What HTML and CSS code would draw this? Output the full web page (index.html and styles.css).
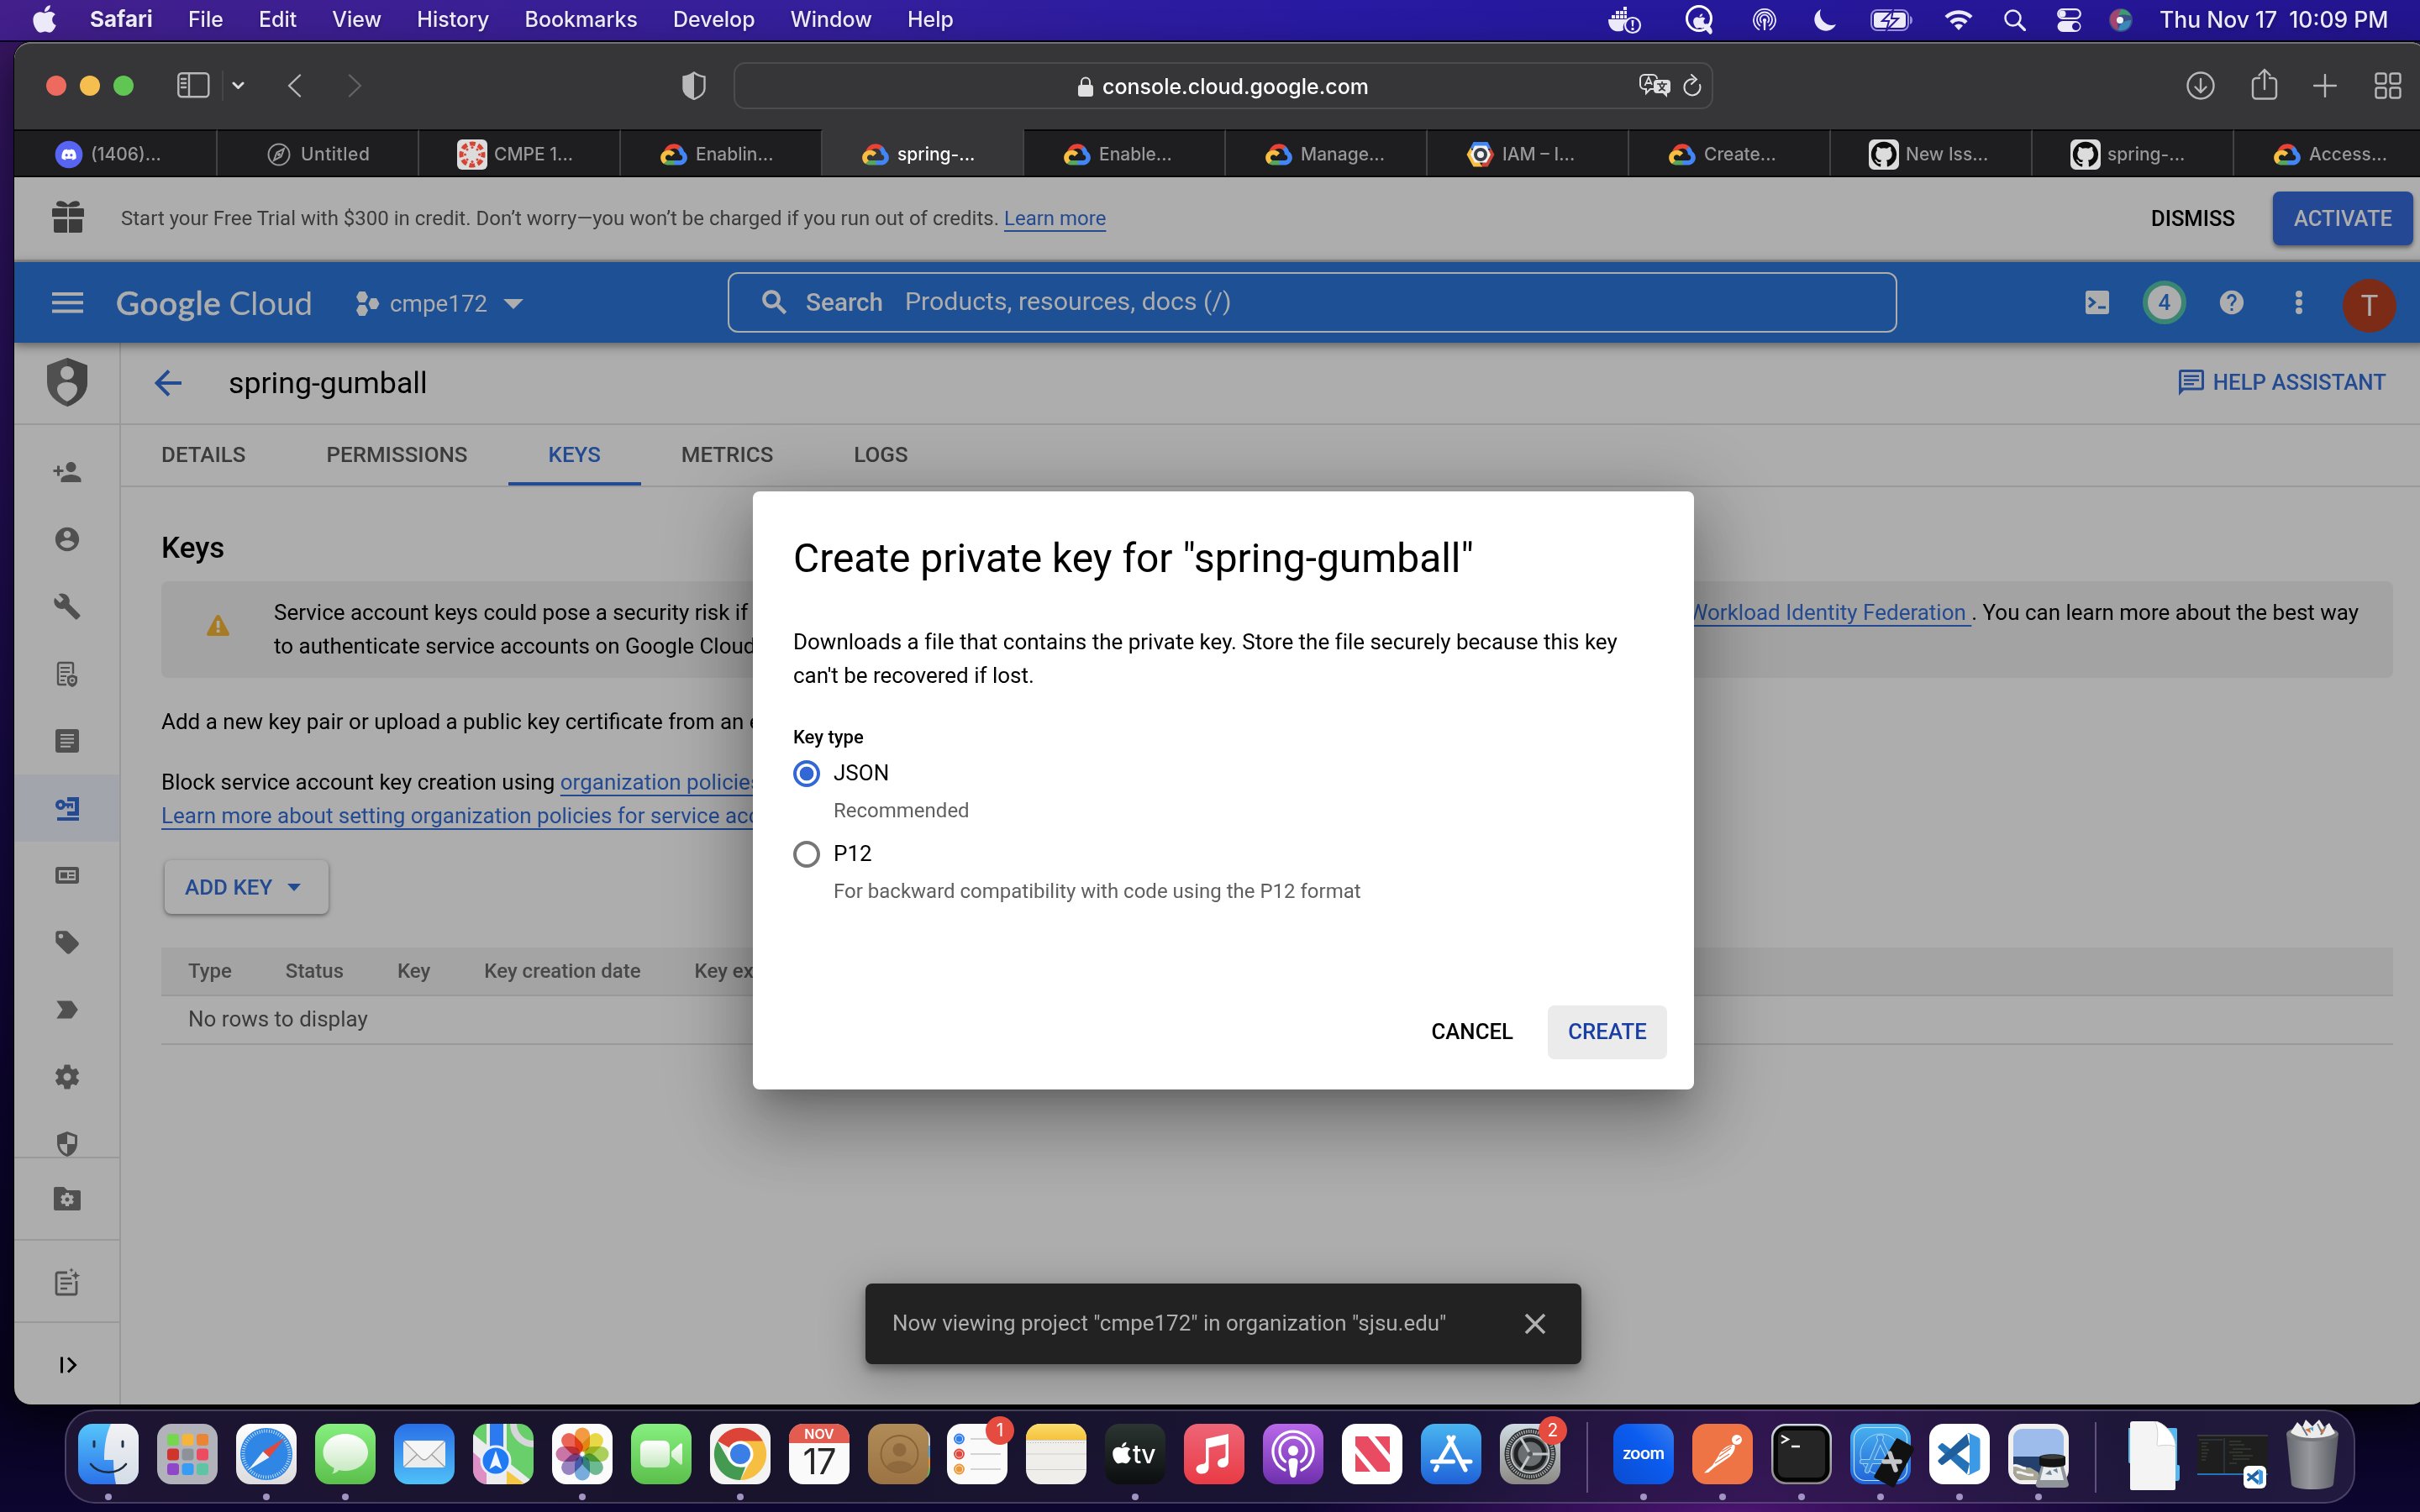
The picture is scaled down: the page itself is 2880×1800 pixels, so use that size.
FILE: index.html
```html
<!DOCTYPE html>
<html lang="en">
<head>
<meta charset="utf-8">
<title>spring-gumball – Service accounts – Google Cloud</title>
<link rel="stylesheet" href="styles.css">
</head>
<body>
<svg class="defs" width="0" height="0" aria-hidden="true">
  <symbol id="gcloud" viewBox="5 14 118 95">
    <path fill="#ea4335" d="M80.6 40.3h.4l-.2-.2 14-14v-.3c-11.8-10.4-28.1-14-43.2-9.5C36.5 20.8 24.9 32.8 20.7 48c.2-.1.5-.2.8-.2 5.2-3.4 11.4-5.4 17.9-5.4 2.2 0 4.3.2 6.4.6.1-.1.2-.1.3-.1 9-9.9 24.2-11.1 34.6-2.6h-.1z"/>
    <path fill="#4285f4" d="M108.1 47.8c-2.3-8.5-7.1-16.2-13.8-22.1L80 39.9c6 4.9 9.5 12.3 9.3 20v2.5c16.9 0 16.9 25.2 0 25.2H63.9v20.2h25.4c14.6.1 27.5-9.3 31.8-23.1 4.3-13.8-1-28.8-13-36.9z"/>
    <path fill="#57a55a" d="M39 107.9h26.3V87.7H39c-1.9 0-3.7-.4-5.4-1.1l-15.2 14.6v.2c6 4.3 13.2 6.6 20.7 6.6z"/>
    <path fill="#f6bf42" d="M40.2 41.9c-14.9.1-28.1 9.3-32.9 22.8-4.8 13.6 0 28.5 11.8 37.3l15.6-14.9c-8.6-3.7-10.6-14.5-4-20.8 6.6-6.4 17.8-4.4 21.7 3.8L68 55.2C61.4 46.9 51.1 42 40.2 42.1z"/>
  </symbol>
  <symbol id="github" viewBox="-1.5 -1.5 19 19">
    <rect x="-1.5" y="-1.5" width="19" height="19" rx="3.4" fill="#dcdcdc"/>
    <path fill="#0d0d0e" d="M8 0C3.58 0 0 3.58 0 8c0 3.54 2.29 6.53 5.47 7.59.4.07.55-.17.55-.38 0-.19-.01-.82-.01-1.49-2.01.37-2.53-.49-2.69-.94-.09-.23-.48-.94-.82-1.13-.28-.15-.68-.52-.01-.53.63-.01 1.08.58 1.23.82.72 1.21 1.87.87 2.33.66.07-.52.28-.87.51-1.07-1.78-.2-3.64-.89-3.64-3.95 0-.87.31-1.59.82-2.15-.08-.2-.36-1.02.08-2.12 0 0 .67-.21 2.2.82.64-.18 1.32-.27 2-.27s1.36.09 2 .27c1.53-1.04 2.2-.82 2.2-.82.44 1.1.16 1.92.08 2.12.51.56.82 1.27.82 2.15 0 3.07-1.87 3.75-3.65 3.95.29.25.54.73.54 1.48 0 1.07-.01 1.93-.01 2.2 0 .21.15.46.55.38A8.01 8.01 0 0016 8c0-4.42-3.58-8-8-8z"/>
  </symbol>
  <symbol id="apple" viewBox="0 28 384 456">
    <path d="M318.7 268.7c-.2-36.7 16.4-64.4 50-84.8-18.8-26.9-47.2-41.7-84.7-44.6-35.5-2.8-74.3 20.7-88.5 20.7-15 0-49.4-19.7-76.4-19.7C63.3 141.2 4 184.8 4 273.5q0 39.3 14.4 81.2c12.8 36.7 59 126.7 107.2 125.2 25.2-.6 43-17.9 75.8-17.9 31.8 0 48.3 17.9 76.4 17.9 48.6-.7 90.4-82.5 102.6-119.3-65.2-30.7-61.7-90-61.7-91.9zm-56.6-164.2c27.3-32.4 24.8-61.9 24-72.5-24.1 1.4-52 16.4-67.9 34.9-17.5 19.8-27.8 44.3-25.6 71.9 26.1 2 49.9-11.4 69.5-34.3z"/>
  </symbol>
  <symbol id="gear" viewBox="0 0 24 24">
    <path d="M19.14 12.94c.04-.3.06-.61.06-.94 0-.32-.02-.64-.07-.94l2.03-1.58c.18-.14.23-.41.12-.61l-1.92-3.32c-.12-.22-.37-.29-.59-.22l-2.39.96c-.5-.38-1.03-.7-1.62-.94l-.36-2.54c-.04-.24-.24-.41-.48-.41h-3.84c-.24 0-.43.17-.47.41l-.36 2.54c-.59.24-1.13.57-1.62.94l-2.39-.96c-.22-.08-.47 0-.59.22L2.74 8.87c-.12.21-.08.47.12.61l2.03 1.58c-.05.3-.09.63-.09.94s.02.64.07.94l-2.03 1.58c-.18.14-.23.41-.12.61l1.92 3.32c.12.22.37.29.59.22l2.39-.96c.5.38 1.03.7 1.62.94l.36 2.54c.05.24.24.41.48.41h3.84c.24 0 .44-.17.47-.41l.36-2.54c.59-.24 1.13-.56 1.62-.94l2.39.96c.22.08.47 0 .59-.22l1.92-3.32c.12-.22.07-.47-.12-.61l-2.01-1.58zM12 15c-1.65 0-3-1.35-3-3s1.35-3 3-3 3 1.35 3 3-1.35 3-3 3z"/>
  </symbol>
  <symbol id="vscode" viewBox="0 0 24 24">
    <path fill="#2472b8" d="M.33 7.26A1 1 0 0 0 .33 8.74L16.5 23.5l1.5-6.05L2.93 6a1 1 0 0 0-1.28.06z"/>
    <path fill="#1f5f9e" d="M.33 15.26a1 1 0 0 0 0 1.48l1.32 1.2a1 1 0 0 0 1.28.06L18 6.55 16.5.5z"/>
    <path fill="#3c99e6" d="M16.5.5A1.5 1.5 0 0 1 18.21.21l4.94 2.38A1.5 1.5 0 0 1 24 3.94v16.12a1.5 1.5 0 0 1-.85 1.35l-4.94 2.38a1.5 1.5 0 0 1-1.7-.29c.5.3 1.5 0 1.5-1V1.5c0-1-1-1.3-1.5-1z"/>
  </symbol>
  <linearGradient id="gGreen" x2="0" y2="1"><stop offset="0" stop-color="#86ef7f"/><stop offset="1" stop-color="#5bbf4b"/></linearGradient>
  <linearGradient id="gBlueDown" x2="0" y2="1"><stop offset="0" stop-color="#2a6fe8"/><stop offset="1" stop-color="#4fc0f8"/></linearGradient>
  <linearGradient id="gBlueUp" x2="0" y2="1"><stop offset="0" stop-color="#49b5f0"/><stop offset="1" stop-color="#1f62d8"/></linearGradient>
  <linearGradient id="gWhite" x2="0" y2="1"><stop offset="0" stop-color="#fff"/><stop offset="1" stop-color="#dcdcdc"/></linearGradient>
  <linearGradient id="gWhiteGreen" x2="0" y2="1"><stop offset="0" stop-color="#fff"/><stop offset="1" stop-color="#c4e8bd"/></linearGradient>
  <linearGradient id="gFinder" x2="0" y2="1"><stop offset="0" stop-color="#56c5fa"/><stop offset="1" stop-color="#2b72ea"/></linearGradient>
  <linearGradient id="gFinderR" x2="0" y2="1"><stop offset="0" stop-color="#f2f2f5"/><stop offset="1" stop-color="#d3dce6"/></linearGradient>
  <linearGradient id="gBrown" x2="0" y2="1"><stop offset="0" stop-color="#b08c58"/><stop offset="1" stop-color="#9c7344"/></linearGradient>
  <linearGradient id="gNote" x2="0" y2="1"><stop offset="0" stop-color="#fbdc6c"/><stop offset="1" stop-color="#f5c23c"/></linearGradient>
  <linearGradient id="gTv" x2="0" y2="1"><stop offset="0" stop-color="#2b3531"/><stop offset="1" stop-color="#0c0e10"/></linearGradient>
  <linearGradient id="gMusic" x2="0" y2="1"><stop offset="0" stop-color="#ee6577"/><stop offset="1" stop-color="#e93b45"/></linearGradient>
  <linearGradient id="gPod" x2="0" y2="1"><stop offset="0" stop-color="#b969ea"/><stop offset="1" stop-color="#6f30ad"/></linearGradient>
  <linearGradient id="gZoom" x1="1" y1="0" x2="0" y2="1"><stop offset="0" stop-color="#3a7fec"/><stop offset=".4" stop-color="#0b5cf0"/><stop offset="1" stop-color="#0a4cd0"/></linearGradient>
  <linearGradient id="gGray" x2="0" y2="1"><stop offset="0" stop-color="#cfdce2"/><stop offset="1" stop-color="#8b8985"/></linearGradient>
  <linearGradient id="gTrash" x2="1" y2="0"><stop offset="0" stop-color="#6d7174"/><stop offset=".45" stop-color="#a4a7a9"/><stop offset="1" stop-color="#5e6265"/></linearGradient>
  <radialGradient id="gSiri"><stop offset="0" stop-color="#fff"/><stop offset=".35" stop-color="#79a8d8"/><stop offset=".7" stop-color="#5a4a86"/><stop offset="1" stop-color="#3e8a6a"/></radialGradient>
</svg>

<header class="menubar">
  <nav class="menus">
    <svg class="apple" width="28" height="33"><use href="#apple"/></svg>
    <b>Safari</b><span>File</span><span>Edit</span><span>View</span><span>History</span><span>Bookmarks</span><span>Develop</span><span>Window</span><span>Help</span>
  </nav>
  <div class="status">
    <svg width="40" height="34" viewBox="0 0 40 34"><path d="M0 16h24a11 11 0 0 0-6 13c-6 3-18 2-18-13z"/><path d="M4 11h4v4H4zM9 11h4v4H9zM14 11h4v4h-4zM19 11h3v4h-3zM9 6h4v4H9zM14 6h4v4h-4zM19 6h3v4h-3zM18 1h4v4h-4z"/><circle cx="29" cy="23" r="9" fill="none" stroke="#eceaf8" stroke-width="2.200"/><path d="M27.500 17h3l-.6 7.500h-1.800zM27.500 26h3v3h-3z"/></svg>
    <svg width="36" height="36" viewBox="0 0 36 36"><circle cx="17" cy="16" r="14.500" fill="none" stroke="#fff" stroke-width="3"/><use href="#apple" x="10" y="10" width="15" height="18"/><path d="M20 24l10 11c4-1 3-6 1-8l-4-5z"/></svg>
    <svg width="28" height="28" viewBox="0 0 28 28" fill="none" stroke="#eceaf8" stroke-width="1.800"><path fill="none" d="M8 25.500a13 13 0 1 1 12 0M9 21a9 9 0 1 1 10 0M10.500 17a5.300 5.300 0 1 1 7 0"/><path d="M14 12a2 2 0 0 1 1.500 3.500L15 26h-2l-.5-10.500A2 2 0 0 1 14 12z" fill="#eceaf8" stroke="none"/></svg>
    <svg width="26" height="26" viewBox="0 0 26 26"><path d="M8 0a13.500 13.500 0 1 0 18 18A14 14 0 0 1 8 0z"/></svg>
    <svg width="50" height="26" viewBox="0 0 50 26"><rect x="1" y="1" width="44" height="24" rx="7" fill="none" stroke="#9a90d4" stroke-width="2"/><path d="M47 8c4 1 4 9 0 10z" fill="#9a90d4"/><rect x="4" y="4" width="38" height="18" rx="4"/><path d="M27 1L14 14h8l-3 11 14-14h-8z" stroke="#2a1a9a" stroke-width="2"/></svg>
    <svg width="34" height="26" viewBox="0 0 34 26" fill="none" stroke="#eceaf8" stroke-width="4.500"><path fill="none" d="M2 9.500a21.500 21.500 0 0 1 30 0M8 15.800a12.800 12.800 0 0 1 18 0"/><path d="M17 25l-5-5.500a7.500 7.500 0 0 1 10 0z" fill="#eceaf8" stroke="none"/></svg>
    <svg width="26" height="26" viewBox="0 0 26 26" stroke="#eceaf8" stroke-linecap="round"><circle cx="10.500" cy="10.500" r="9" fill="none" stroke-width="2.500"/><path d="M17 17l7.500 7.500" stroke-width="3.200"/></svg>
    <svg width="29" height="28" viewBox="0 0 29 28"><rect x="1.200" y="1.200" width="26.600" height="10.600" rx="5.300" fill="none" stroke="#eceaf8" stroke-width="2.200"/><circle cx="6.500" cy="6.500" r="4"/><path fill-rule="evenodd" d="M7 15h15a6.500 6.500 0 0 1 0 13H7a6.500 6.500 0 0 1 0-13zm15.500 2a4.500 4.500 0 1 0 0 9 4.500 4.500 0 0 0 0-9z"/></svg>
    <svg width="28" height="28" viewBox="0 0 28 28"><circle cx="14" cy="14" r="14" fill="#3b4f86"/><path d="M14 1a13 13 0 0 1 12 8c-6-2-12-2-16 0z" fill="#3f9a72"/><path d="M2 8A14 14 0 0 1 14 1c-3 6-5 16-3 25A14 14 0 0 1 2 8z" fill="#c8406a" opacity=".75"/><path d="M11 26c0-6 6-12 15-12a12 12 0 0 1-15 12z" fill="#3a9fd0" opacity=".7"/><circle cx="13" cy="14" r="4" fill="#fff" opacity=".92"/></svg>
    <time>Thu Nov 17&nbsp; 10:09 PM</time>
  </div>
</header>

<main class="window">
  <div class="toolbar">
    <div class="lights"><i class="red"></i><i class="yellow"></i><i class="green"></i></div>
    <svg width="39" height="31" viewBox="0 0 39 31" class="line"><rect x="1.300" y="1.300" width="36" height="28" rx="4"/><path d="M14 1v28M5 8h5M5 13h5M5 18h5"/></svg>
    <i class="vsep"></i>
    <svg width="15" height="10" viewBox="0 0 15 10" class="line bright"><path d="M2 2l5.500 5.500L13 2"/></svg>
    <svg width="17" height="28" viewBox="0 0 17 28" class="line"><path d="M15 1.500L2 14l13 12.500"/></svg>
    <svg width="17" height="28" viewBox="0 0 17 28" class="line faint"><path d="M2 1.500L15 14 2 26.500"/></svg>
    <svg width="28" height="34" viewBox="0 0 28 34" class="shield"><path d="M14 1.500c4 3 8 4.500 12.500 5v14c0 6-6 10-12.500 12.500C7.500 30.500 1.500 26.500 1.500 20.500v-14C6 6 10 4.500 14 1.500z" fill="none" stroke="#b8b7ba" stroke-width="2.400"/><path d="M14 1.500V33C7.500 30.500 1.500 26.500 1.500 20.500v-14C6 6 10 4.500 14 1.500z"/></svg>
    <div class="url">
      <div class="address"><svg width="18" height="24" viewBox="0 0 18 24"><rect y="10" width="18" height="14" rx="3"/><path d="M4 11V6.500a5 5 0 0 1 10 0V11" fill="none" stroke="#dedede" stroke-width="2"/></svg><span>console.cloud.google.com</span></div>
      <svg width="38" height="28" viewBox="0 0 38 28"><path d="M18 18h-5l-5 5v-5H6a5 5 0 0 1-5-5V6a5 5 0 0 1 5-5h10a5 5 0 0 1 5 5" fill="none" stroke="#dedede" stroke-width="2"/><path d="M6.500 14l4.500-10 4 9M8 11h6" fill="none" stroke="#dedede" stroke-width="1.800"/><path d="M21 7h12a4 4 0 0 1 4 4v8a4 4 0 0 1-4 4v5l-5-5h-7a4 4 0 0 1-4-4v-8a4 4 0 0 1 4-4z"/><path d="M21 12h12M27 9v3M23 20c4-2 6-4 7-8M24 12c1 4 4 7 7 8" fill="none" stroke="#363538" stroke-width="1.700"/></svg>
      <svg width="22" height="27" viewBox="0 0 22 27" class="reload"><path d="M12.500 6.500A9.500 9.500 0 1 0 20 13M10 1l6 5.500-6 5.500" fill="none" stroke="#dedede" stroke-width="2" stroke-linecap="round"/></svg>
    </div>
    <svg width="34" height="34" viewBox="0 0 34 34" class="line"><circle cx="17" cy="17" r="15.500"/><path d="M17 9v16M10.500 18.500L17 25l6.500-6.500"/></svg>
    <svg width="32" height="38" viewBox="0 0 32 38" class="line up"><path d="M10 12H6a4 4 0 0 0-4 4v16.500a4 4 0 0 0 4 4h20a4 4 0 0 0 4-4V16a4 4 0 0 0-4-4h-4M16 25V2M9.500 8.500L16 2l6.500 6.500"/></svg>
    <svg width="28" height="28" viewBox="0 0 28 28" class="line"><path d="M14 1v26M1 14h26"/></svg>
    <svg width="32" height="32" viewBox="0 0 32 32" class="line"><rect x="1.500" y="1.500" width="12" height="12" rx="2.500"/><rect x="18.500" y="1.500" width="12" height="12" rx="2.500"/><rect x="1.500" y="18.500" width="12" height="12" rx="2.500"/><rect x="18.500" y="18.500" width="12" height="12" rx="2.500"/></svg>
  </div>

  <div class="tabs">
    <div class="tab"><svg width="36" height="36" viewBox="-10 -10 44 44"><circle cx="12" cy="12" r="20" fill="#5865f2"/><path transform="translate(1.500 1.500) scale(.88)" fill="#fff" d="M20.317 4.370a19.790 19.790 0 0 0-4.885-1.515c-.3.375-.520.900-.690 1.290a18.270 18.270 0 0 0-5.487 0c-.170-.400-.400-.890-.690-1.290A19.736 19.736 0 0 0 3.677 4.370C.533 9.046-.320 13.580.099 18.057a19.900 19.900 0 0 0 6.070 3.030c.480-.63.900-1.300 1.260-2.040a13.107 13.107 0 0 1-1.900-1l.4-.35c3.950 1.800 8.200 1.800 12.140 0l.4.35c-.6.35-1.200.66-1.900 1 .36.740.780 1.400 1.260 2.040a19.839 19.839 0 0 0 6.080-3.030c.500-5.177-.838-9.674-3.590-13.690zM8.020 15.330c-1.183 0-2.157-1.085-2.157-2.419 0-1.333.956-2.419 2.157-2.419 1.210 0 2.176 1.096 2.157 2.420 0 1.333-.956 2.418-2.157 2.418zm7.975 0c-1.183 0-2.157-1.085-2.157-2.419 0-1.333.955-2.419 2.157-2.419 1.210 0 2.176 1.096 2.157 2.420 0 1.333-.946 2.418-2.157 2.418z"/></svg><span>(1406)...</span></div>
    <div class="tab short"><svg width="36" height="36" viewBox="0 0 36 36" fill="none" stroke="#98989a" stroke-width="2"><circle cx="18" cy="18" r="12.500"/><path d="M24 11l-3.500 9.500L12 25l3.500-9.500z"/><circle cx="18" cy="18" r="1"/></svg><span>Untitled</span></div>
    <div class="tab"><svg width="36" height="36" viewBox="0 0 36 36"><rect width="36" height="36" rx="6" fill="#dcdcdc"/><circle cx="18" cy="18" r="13" fill="none" stroke="#d64434" stroke-width="5" stroke-dasharray="6.800 3.410" stroke-dashoffset="3.400"/><g fill="#d64434"><circle cx="18" cy="9.500" r="1.500"/><circle cx="18" cy="26.500" r="1.500"/><circle cx="9.500" cy="18" r="1.500"/><circle cx="26.500" cy="18" r="1.500"/><circle cx="12" cy="12" r="1.500"/><circle cx="24" cy="12" r="1.500"/><circle cx="12" cy="24" r="1.500"/><circle cx="24" cy="24" r="1.500"/></g></svg><span>CMPE 1...</span></div>
    <div class="tab"><svg class="gc" width="32" height="26"><use href="#gcloud"/></svg><span>Enablin...</span></div>
    <div class="tab active"><svg class="gc" width="32" height="26"><use href="#gcloud"/></svg><span>spring-...</span></div>
    <div class="tab"><svg class="gc" width="32" height="26"><use href="#gcloud"/></svg><span>Enable...</span></div>
    <div class="tab"><svg class="gc" width="32" height="26"><use href="#gcloud"/></svg><span>Manage...</span></div>
    <div class="tab"><svg width="36" height="36" viewBox="0 0 36 36"><path d="M9.500 3h17l4 8h-25z" fill="#4285f4"/><path d="M30 10l4.500 8-8 14.500H18z" fill="#c94535"/><path d="M6 10L1.500 18l8 14.500H20z" fill="#f6bf42"/><path d="M11 7.500h14l5 10.500-5 9.500H11L6 18z" fill="#f1f1f1"/><circle cx="18" cy="18" r="6" fill="none" stroke="#3a3f48" stroke-width="4"/></svg><span>IAM – I...</span></div>
    <div class="tab"><svg class="gc" width="32" height="26"><use href="#gcloud"/></svg><span>Create...</span></div>
    <div class="tab"><svg width="36" height="36"><use href="#github"/></svg><span>New Iss...</span></div>
    <div class="tab"><svg width="36" height="36"><use href="#github"/></svg><span>spring-...</span></div>
    <div class="tab"><svg class="gc" width="32" height="26"><use href="#gcloud"/></svg><span>Access...</span></div>
  </div>

  <section class="banner">
    <svg width="38" height="38" viewBox="0 0 38 38"><path d="M1 9h17v10H0v-9zM20 9h17l1 1v9H20zM2 22h16v16H4a2 2 0 0 1-2-2zM20 22h16v14a2 2 0 0 1-2 2H20zM19 7c-2 1-14 1-14-3s7-6 14 1c7-7 14-5 14-1s-12 4-14 3z"/></svg>
    <p>Start your Free Trial with $300 in credit. Don’t worry—you won’t be charged if you run out of credits. <a>Learn more</a></p>
    <button class="dismiss">DISMISS</button>
    <button class="activate">ACTIVATE</button>
  </section>

  <header class="gcp">
    <svg class="burger" width="37" height="25" viewBox="0 0 37 25"><path d="M0 0h37v4H0zM0 10.300h37v4H0zM0 20.600h37v4H0z"/></svg>
    <div class="logo"><b>Google</b><span>Cloud</span></div>
    <div class="project">
      <svg width="28" height="30" viewBox="0 0 28 30"><path d="M3.500 0h7L14 6.500 10.500 13h-7L0 6.500zM3.500 16h7l3.500 6.500-3.500 6.500h-7L0 22.500zM17.500 8h6.500l3.500 6.500L24 21h-6.500L14.500 14.500z"/></svg>
      <span>cmpe172</span>
      <svg width="24" height="12" viewBox="0 0 24 12"><path d="M0 0h24L12 12z"/></svg>
    </div>
    <div class="search">
      <svg width="38" height="38" viewBox="0 0 24 24"><path d="M15.500 14h-.79l-.28-.27C15.410 12.590 16 11.110 16 9.500 16 5.910 13.090 3 9.500 3S3 5.910 3 9.500 5.910 16 9.500 16c1.610 0 3.090-.59 4.230-1.570l.27.28v.79l5 4.990L20.490 19l-4.990-5zm-6 0C7.010 14 5 11.990 5 9.500S7.010 5 9.500 5 14 7.010 14 9.500 11.990 14 9.500 14z" stroke="#adadad" stroke-width=".7"/></svg>
      <b>Search</b><span>Products, resources, docs (/)</span>
    </div>
    <div class="tools">
      <svg width="28" height="28" viewBox="0 0 28 28"><rect width="28" height="28" rx="3"/><path d="M4 8.500l6.500 5.500L4 19.500M15 20h9" fill="none" stroke="#1d5095" stroke-width="3.200"/></svg>
      <div class="count">4</div>
      <svg width="34" height="34" viewBox="0 0 24 24"><path d="M12 2C6.480 2 2 6.480 2 12s4.480 10 10 10 10-4.480 10-10S17.520 2 12 2zm1 17h-2v-2h2v2zm2.070-7.750l-.9.920C13.450 12.900 13 13.500 13 15h-2v-.5c0-1.100.45-2.100 1.170-2.830l1.240-1.260c.37-.36.59-.86.59-1.410 0-1.100-.9-2-2-2s-2 .9-2 2H8c0-2.210 1.790-4 4-4s4 1.790 4 4c0 .88-.36 1.680-.93 2.250z"/></svg>
      <svg width="8" height="28" viewBox="0 0 8 28"><circle cx="4" cy="4" r="4"/><circle cx="4" cy="14" r="4"/><circle cx="4" cy="24" r="4"/></svg>
      <div class="avatar">T</div>
    </div>
  </header>

  <div class="body">
    <aside class="side">
      <div class="product"><svg width="48" height="58" viewBox="0 0 48 58"><path d="M24 0l24 9v20c0 14-10 24-24 29C10 53 0 43 0 29V9z" fill="#505050"/><path d="M24 0l24 9v20c0 14-10 24-24 29z" fill="#434343"/><circle cx="24" cy="18" r="8" fill="#adadad"/><path d="M12 37c0-5 5-8 12-8s12 3 12 8c0 7-6 12-12 15-6-3-12-8-12-15z" fill="#adadad"/></svg></div>
      <div class="list">
        <div><svg viewBox="0 0 24 24"><path d="M15 12c2.210 0 4-1.790 4-4s-1.790-4-4-4-4 1.790-4 4 1.790 4 4 4zm-9-2V7H4v3H1v2h3v3h2v-3h3v-2H6zm9 4c-2.670 0-8 1.340-8 4v2h16v-2c0-2.660-5.330-4-8-4z"/></svg></div>
        <div><svg class="s" viewBox="0 0 24 24"><path d="M12 2C6.480 2 2 6.480 2 12s4.480 10 10 10 10-4.480 10-10S17.520 2 12 2zm0 3c1.660 0 3 1.340 3 3s-1.340 3-3 3-3-1.340-3-3 1.340-3 3-3zm0 14.200c-2.500 0-4.710-1.280-6-3.220.03-1.990 4-3.080 6-3.080 1.990 0 5.970 1.090 6 3.080-1.290 1.940-3.500 3.220-6 3.220z"/></svg></div>
        <div><svg class="s" viewBox="0 0 24 24"><path d="M22.700 19l-9.100-9.100c.9-2.300.4-5-1.500-6.900-2-2-5-2.400-7.400-1.300L9 6 6 9 1.600 4.700C.4 7.100.9 10.100 2.900 12.100c1.900 1.900 4.600 2.400 6.900 1.500l9.100 9.100c.4.4 1 .4 1.400 0l2.300-2.300c.5-.4.5-1.100.1-1.400z"/></svg></div>
        <div><svg viewBox="0 0 36 36"><path d="M17 31H9a2 2 0 0 1-2-2V7a2 2 0 0 1 2-2h14a2 2 0 0 1 2 2v11" fill="none" stroke="#505050" stroke-width="2.400"/><path d="M10 11h11M10 16h11M10 21h7M10 26h5" stroke="#505050" stroke-width="2.200"/><path d="M24 19l6 2.500v5c0 4-3 6.500-6 7.500-3-1-6-3.500-6-7.500v-5z"/><circle cx="24" cy="26" r="2.600" fill="none" stroke="#adadad" stroke-width="1.600"/></svg></div>
        <div><svg viewBox="0 0 36 36"><path fill-rule="evenodd" d="M7 4h22a3 3 0 0 1 3 3v22a3 3 0 0 1-3 3H7a3 3 0 0 1-3-3V7a3 3 0 0 1 3-3zm3 6v2h16v-2zm0 4.600v2h16v-2zm0 4.600v2h16v-2zm0 4.600v2h12v-2z"/></svg></div>
        <div class="on"><svg viewBox="0 0 36 36"><path d="M18 5h14v22H18v-5h9V10h-9zM6 29h26v4H6z"/><path fill-rule="evenodd" d="M10 8a6 6 0 0 1 5.700 4.300H25v6h-2.500v-2.500h-2.300v2.500h-2.400v-2.500h-2.100A6 6 0 1 1 10 8zm0 4a2.200 2.200 0 1 0 0 4.400 2.200 2.200 0 0 0 0-4.400z"/></svg></div>
        <div><svg viewBox="0 0 36 36"><path fill-rule="evenodd" d="M7 8h22a3 3 0 0 1 3 3v14a3 3 0 0 1-3 3H7a3 3 0 0 1-3-3V11a3 3 0 0 1 3-3zm1 4v12h20V12zm2 2.500h8v7h-8zm10 0h6.500V17H20zm0 4.500h6.500v2.500H20z"/></svg></div>
        <div><svg viewBox="0 0 24 24"><path transform="translate(1 1) scale(.92)" d="M21.410 11.580l-9-9C12.050 2.220 11.550 2 11 2H4c-1.100 0-2 .9-2 2v7c0 .55.22 1.050.59 1.420l9 9c.36.36.86.58 1.410.58.55 0 1.050-.22 1.410-.59l7-7c.37-.36.59-.86.59-1.410 0-.55-.23-1.060-.59-1.420zM6.500 8.500a2 2 0 1 1 0-4 2 2 0 0 1 0 4z"/></svg></div>
        <div><svg viewBox="0 0 24 24"><path d="M3.500 18.990l11 .01c.67 0 1.270-.33 1.630-.84L20.500 12l-4.370-6.160c-.36-.51-.96-.84-1.630-.84l-11 .01L8.340 12 3.500 18.990z"/></svg></div>
        <div><svg><use href="#gear"/></svg></div>
        <div><svg viewBox="0 0 24 24"><path d="M12 2l8 3v6c0 5.500-3.400 9.700-8 11-4.600-1.300-8-5.500-8-11V5zm0 2.300V12H6c.2 3.600 2.600 6.800 6 7.800V12h6V6.400z" fill-rule="evenodd"/></svg></div>
      </div>
      <div class="foot"><svg viewBox="0 0 36 36"><path d="M4 3h10l4 4h14a2 2 0 0 1 2 2v20a2 2 0 0 1-2 2H4a2 2 0 0 1-2-2V5a2 2 0 0 1 2-2z"/><g fill="#adadad"><use href="#gear" x="8" y="8" width="20" height="20"/></g></svg></div>
      <div class="foot"><svg viewBox="0 0 36 36"><path d="M18 7H7a2 2 0 0 0-2 2v22a2 2 0 0 0 2 2h20a2 2 0 0 0 2-2V17" fill="none" stroke="#505050" stroke-width="2.800"/><path d="M10 14h13M10 20h14M10 26h8" stroke="#505050" stroke-width="2.600"/><path d="M28 5l1.500 4 4 1.500-4 1.500-1.500 4-1.500-4-4-1.500 4-1.500zM23 1l.9 2.200 2.100.8-2.100.8L23 7l-.8-2.200L20 4l2.200-.8z"/></svg></div>
      <div class="expand"><svg viewBox="0 0 36 36"><path d="M11.500 8.500v19M19 9.500l8.500 8.500-8.500 8.500" fill="none" stroke="#000" stroke-width="3"/></svg></div>
    </aside>

    <div class="content">
      <div class="title">
        <svg width="32" height="32" viewBox="0 0 32 32"><path d="M17 1.500L2.500 16 17 30.500M2.500 16H32" fill="none" stroke="#244a91" stroke-width="4"/></svg>
        <h1>spring-gumball</h1>
        <div class="assist"><svg width="30" height="31" viewBox="0 0 30 31"><path fill-rule="evenodd" d="M3 0h24a3 3 0 0 1 3 3v18.500a3 3 0 0 1-3 3H6L0 31V3a3 3 0 0 1 3-3zm0 3v18.500h24V3zm3 3.500h18V9H6zm0 4.700h18v2.500H6zM6 16h12v2.500H6z"/></svg>HELP ASSISTANT</div>
      </div>
      <nav class="subtabs"><span>DETAILS</span><span>PERMISSIONS</span><span class="on">KEYS</span><span>METRICS</span><span>LOGS</span></nav>
      <div class="pane">
        <h2>Keys</h2>
        <div class="warn">
          <svg width="27" height="25" viewBox="0 0 27 25"><path fill="#a77b24" d="M13.500 0c1 0 1.800.6 2.300 1.400l10.800 20c.9 1.700-.2 3.600-2 3.600H2.400c-1.800 0-2.900-1.900-2-3.600l10.800-20C11.700.6 12.500 0 13.500 0z"/><path fill="#adadad" d="M11.800 7h3.600v8.500h-3.600zM11.800 17.500h3.600v3.600h-3.600z"/></svg>
          <p>Service account keys could pose a security risk if compromised. We recommend you avoid downloading service account keys and instead use the <a>Workload Identity Federation </a>. You can learn more about the best way to authenticate service accounts on Google Cloud <a>here </a>.</p>
        </div>
        <p>Add a new key pair or upload a public key certificate from an existing key pair.</p>
        <p>Block service account key creation using <a>organization policies</a>.<br><a>Learn more about setting organization policies for service accounts</a></p>
        <button class="add">ADD KEY<svg width="16" height="9" viewBox="0 0 16 9"><path d="M0 0h16L8 9z"/></svg></button>
        <div class="table">
          <div class="thead"><span>Type</span><span>Status</span><span>Key</span><span>Key creation date</span><span>Key expiration date</span></div>
          <div class="row">No rows to display</div>
        </div>
      </div>
    </div>
  </div>
</main>

<section class="dialog">
  <h3>Create private key for "spring-gumball"</h3>
  <p>Downloads a file that contains the private key. Store the file securely because this key can't be recovered if lost.</p>
  <h4>Key type</h4>
  <label><i class="radio checked"></i>JSON</label>
  <small>Recommended</small>
  <label class="second"><i class="radio"></i>P12</label>
  <small>For backward compatibility with code using the P12 format</small>
  <div class="actions"><button>CANCEL</button><button class="create">CREATE</button></div>
</section>

<div class="toast"><span>Now viewing project "cmpe172" in organization "sjsu.edu"</span><svg width="26" height="26" viewBox="0 0 26 26"><path d="M2 2l22 22M24 2L2 24" stroke="#b0b0b0" stroke-width="3.600"/></svg></div>

<footer class="dock">
  <div class="app run"><svg viewBox="0 0 72 72"><rect width="72" height="72" rx="17" fill="url(#gFinder)"/><path d="M39 0h16a17 17 0 0 1 17 17v38a17 17 0 0 1-17 17H45c-2-9-3-18-3-29H31c0-16 2-30 8-43z" fill="url(#gFinderR)"/><path d="M19 21v6M53 21v6" stroke="#20324a" stroke-width="3" stroke-linecap="round"/><path d="M15 48c10 13 32 13 42 0" fill="none" stroke="#1c2b3d" stroke-width="2.600" stroke-linecap="round"/></svg></div>
  <div class="app"><svg viewBox="0 0 72 72"><rect width="72" height="72" rx="17" fill="#b2b2ba"/><rect x="12" y="12" width="14" height="14" rx="3.500" fill="#76d64e"/><rect x="29.500" y="12" width="14" height="14" rx="3.500" fill="#f5b53a"/><rect x="47" y="12" width="14" height="14" rx="3.500" fill="#e98534"/><rect x="12" y="29.500" width="14" height="14" rx="3.500" fill="#d0342c"/><rect x="29.500" y="29.500" width="14" height="14" rx="3.500" fill="#8c9298"/><rect x="47" y="29.500" width="14" height="14" rx="3.500" fill="#ec4b60"/><rect x="12" y="47" width="14" height="14" rx="3.500" fill="#9046c8"/><rect x="29.500" y="47" width="14" height="14" rx="3.500" fill="#389cf2"/><rect x="47" y="47" width="14" height="14" rx="3.500" fill="#5fc4a4"/></svg></div>
  <div class="app run"><svg viewBox="0 0 72 72"><rect width="72" height="72" rx="17" fill="url(#gWhite)"/><circle cx="36" cy="36" r="31" fill="#2f86e4"/><circle cx="36" cy="36" r="27.500" fill="none" stroke="#d8eafa" stroke-width="4" stroke-dasharray=".9 1.980"/><path d="M58 17L39.500 40 32 33z" fill="#e2483c"/><path d="M14.500 55L32 33l7.500 7z" fill="#f2f2f2"/></svg></div>
  <div class="app run"><svg viewBox="0 0 72 72"><rect width="72" height="72" rx="17" fill="url(#gGreen)"/><path d="M36 12c15 0 27 9.500 27 22S51 56 36 56c-3 0-5-.3-7.500-1-2 2.500-5 4-8.500 4.500 2-2 2.500-4.500 2.500-7C14 48.500 9.500 42 9.500 34 9.500 21.500 21 12 36 12z" fill="url(#gWhiteGreen)"/></svg></div>
  <div class="app"><svg viewBox="0 0 72 72"><rect width="72" height="72" rx="17" fill="url(#gBlueDown)"/><rect x="11" y="20" width="50" height="32" rx="3.500" fill="#ececec"/><path d="M12 51l18-17M60 51L42 34" stroke="#9a9a9a" stroke-width="1.200"/><path d="M12 21l20 20c2.500 2.500 5.500 2.500 8 0l20-20" fill="#f6f6f6" stroke="#a2a2a2" stroke-width="1.200"/></svg></div>
  <div class="app"><svg viewBox="0 0 72 72"><clipPath id="mapClip"><rect width="72" height="72" rx="17"/></clipPath><g clip-path="url(#mapClip)"><rect width="72" height="72" fill="#69cf6a"/><path d="M0 30l30 10v32H0z" fill="#dd8fc6"/><path d="M0 12l72 58v2H44L0 34z" fill="#ececef"/><path d="M38 54l24 18H38z" fill="#f5c63f"/><path d="M16 0h24v72H16z" fill="#ececef"/><path d="M20 0h16v36H20z" fill="#2b7af0"/><circle cx="72" cy="0" r="24" fill="none" stroke="#d5d5da" stroke-width="8"/></g><circle cx="27" cy="44" r="17" fill="#1f7af4" stroke="#e8eefc" stroke-width="3"/><path d="M27 32l7.500 22-7.500-4.500-7.500 4.500z" fill="#f2f6ff"/></svg></div>
  <div class="app run"><svg viewBox="0 0 72 72"><rect width="72" height="72" rx="17" fill="#fbfbfb"/><g class="petals"><rect x="27" y="4.500" width="18" height="29" rx="9" fill="#f4942f"/><rect x="27" y="4.500" width="18" height="29" rx="9" fill="#ead934" transform="rotate(45 36 36)"/><rect x="27" y="4.500" width="18" height="29" rx="9" fill="#a5cf4a" transform="rotate(90 36 36)"/><rect x="27" y="4.500" width="18" height="29" rx="9" fill="#5fb587" transform="rotate(135 36 36)"/><rect x="27" y="4.500" width="18" height="29" rx="9" fill="#6ba7dc" transform="rotate(180 36 36)"/><rect x="27" y="4.500" width="18" height="29" rx="9" fill="#8d78bd" transform="rotate(225 36 36)"/><rect x="27" y="4.500" width="18" height="29" rx="9" fill="#c868a0" transform="rotate(270 36 36)"/><rect x="27" y="4.500" width="18" height="29" rx="9" fill="#ec5544" transform="rotate(315 36 36)"/></g></svg></div>
  <div class="app"><svg viewBox="0 0 72 72"><rect width="72" height="72" rx="17" fill="url(#gGreen)"/><rect x="11" y="20" width="35" height="32" rx="7" fill="url(#gWhiteGreen)"/><path d="M48 33l10-9c1.500-1.300 3-.5 3 1v22c0 1.500-1.500 2.300-3 1l-10-9z" fill="url(#gWhiteGreen)"/></svg></div>
  <div class="app run"><svg viewBox="0 0 72 72"><rect width="72" height="72" rx="17" fill="#f3f3f3"/><path d="M36 36L9 20.500A31 31 0 0 1 63 20.500z" fill="#dc4437"/><path d="M36 20.500h27A31 31 0 0 1 36 67l13-24z" fill="#f6bf42"/><path d="M9 20.500L22.500 44 36 51.500h6L36 67A31 31 0 0 1 9 20.500z" fill="#449a50"/><circle cx="36" cy="36" r="15.500" fill="#fff"/><circle cx="36" cy="36" r="12" fill="#3a7ee6"/></svg></div>
  <div class="app cal"><div class="month">NOV</div><div class="day">17</div></div>
  <div class="app"><svg viewBox="0 0 72 72"><path d="M66 8c6 0 8 5 8 10v10h-8z" fill="#c9ccd0"/><path d="M66 26h8v14h-8z" fill="#4aa5e0"/><path d="M66 40h8v12h-8z" fill="#e88c30"/><path d="M66 52h8c0 8-2 12-8 14z" fill="#5cbf5e"/><rect width="72" height="72" rx="17" fill="url(#gBrown)"/><circle cx="37.500" cy="36" r="22" fill="none" stroke="#876438" stroke-width="1.800"/><circle cx="37.500" cy="31" r="8" fill="#8e6a3e"/><path d="M22 51c4-9 27-9 31 0-8 9-23 9-31 0z" fill="#8e6a3e"/></svg></div>
  <div class="app"><svg viewBox="0 0 72 72"><rect width="72" height="72" rx="17" fill="#fafafa"/><path d="M28 18h36M28 36h36M28 54h36" stroke="#c6c6c6" stroke-width="1.600"/><g stroke-width="1.800" fill="none"><circle cx="14.500" cy="18" r="5.500" stroke="#2e7ef0"/><circle cx="14.500" cy="36" r="5.500" stroke="#e0483c"/><circle cx="14.500" cy="54" r="5.500" stroke="#ec9838"/></g><circle cx="14.500" cy="18" r="3.800" fill="#2e7ef0"/><circle cx="14.500" cy="36" r="3.800" fill="#e0483c"/><circle cx="14.500" cy="54" r="3.800" fill="#ec9838"/></svg><span class="badge">1</span></div>
  <div class="app"><svg viewBox="0 0 72 72"><rect width="72" height="72" rx="17" fill="#efeeea"/><path d="M0 19v-2A17 17 0 0 1 17 0h38a17 17 0 0 1 17 17v2z" fill="url(#gNote)"/><path d="M0 19.500h72M0 36h72M0 54.500h72" stroke="#cfcdc8" stroke-width="1.200"/><path d="M2 22.500h68" stroke="#b9b7b0" stroke-width="1.200" stroke-dasharray="1.200 1.800"/></svg></div>
  <div class="app run tv"><svg viewBox="0 0 72 72"><rect width="72" height="72" rx="17" fill="url(#gTv)"/><use href="#apple" x="9" y="21" width="22" height="27" fill="#fff"/></svg><span>tv</span></div>
  <div class="app"><svg viewBox="0 0 72 72"><rect width="72" height="72" rx="17" fill="url(#gMusic)"/><path d="M26 18l27-6v33c0 4-3 7-7 7-3.500 0-6-2-6-5 0-3.500 3-5.500 6.500-6 2-.3 3-1 3-3V24l-20 4.500V52c0 4-3 7.500-8 7.500-4 0-7-2-7-5.500s3-5.500 7-6c3-.4 4.500-1 4.500-3.500z" fill="#fff"/></svg></div>
  <div class="app"><svg viewBox="0 0 72 72"><rect width="72" height="72" rx="17" fill="url(#gPod)"/><g fill="none" stroke="#fff" stroke-width="3.200" stroke-linecap="round"><path d="M26 55a24 24 0 1 1 20 0M26.500 45a16 16 0 1 1 19 0"/></g><circle cx="36" cy="32" r="6" fill="#fff"/><path d="M36 41c4 0 6 1.800 5.500 5.500l-1.700 13c-.4 3-1.600 4.500-3.800 4.500s-3.400-1.500-3.800-4.500l-1.700-13C30 42.800 32 41 36 41z" fill="#fff"/></svg></div>
  <div class="app"><svg viewBox="0 0 72 72"><rect width="72" height="72" rx="17" fill="#fff"/><path d="M16 15h15l26 32v10H42L16 26z" fill="#e94b62"/><path d="M39 15h18v22zM16 35l18 22H16z" fill="#e94b62"/></svg></div>
  <div class="app"><svg viewBox="0 0 72 72"><rect width="72" height="72" rx="17" fill="url(#gBlueUp)"/><g stroke="#fff" stroke-width="5" stroke-linecap="round"><path d="M39 16L22 45M33 16l20 39M19.500 51L17.500 55M13.500 45h25M49 45h10"/></g></svg></div>
  <div class="app"><svg viewBox="0 0 72 72"><rect width="72" height="72" rx="17" fill="url(#gGray)"/><circle cx="36" cy="36" r="30.500" fill="#2c2e30"/><circle cx="36" cy="36" r="27" fill="none" stroke="#a4a8aa" stroke-width="4" stroke-dasharray="1.500 1.330"/><circle cx="36" cy="36" r="22.500" fill="#6a6d6f" stroke="#c3c6c8" stroke-width="2"/><circle cx="36" cy="36" r="17" fill="none" stroke="#1f2122" stroke-width="5"/><circle cx="36" cy="36" r="11" fill="#6b6e70"/><path d="M36 36h22M36 36L25 17M36 36L25 55" stroke="#c6c9cb" stroke-width="3"/><circle cx="36" cy="36" r="3" fill="#55585a"/></svg><span class="badge">2</span></div>
  <i class="sep"></i>
  <div class="app run zoom"><svg viewBox="0 0 72 72"><rect width="72" height="72" rx="17" fill="url(#gZoom)"/></svg><span>zoom</span></div>
  <div class="app run"><svg viewBox="0 0 72 72"><rect width="72" height="72" rx="17" fill="#ee7446"/><circle cx="53" cy="19" r="6" fill="#fff"/><path d="M50 25c2 3 0 9-5 14L26 52l-7 6-5 .500 4-4 6-5 7-11c3-7 10-14 19-13.500z" fill="#fff"/><path d="M32 39l14-10M27 47l17-11M35 33l12-7" stroke="#ee7446" stroke-width="1.300"/><path d="M56.500 17l-4.500 3" stroke="#ee7446" stroke-width="1.500"/></svg></div>
  <div class="app run term"><svg viewBox="0 0 72 72"><rect width="72" height="72" rx="17" fill="url(#gGray)"/><rect x="2.500" y="2.500" width="67" height="67" rx="15" fill="#050505"/><rect x="8" y="8" width="56" height="56" rx="8" fill="#252526"/><path d="M12 14l8 4.500-8 4.500M24 27h10" fill="none" stroke="#f2f2f2" stroke-width="2.400"/></svg></div>
  <div class="app run"><svg viewBox="0 0 72 72"><rect width="72" height="72" rx="17" fill="url(#gBlueUp)"/><rect x="4.500" y="4.500" width="63" height="63" rx="13" fill="none" stroke="#bfe2fa" stroke-width="1.200"/><circle cx="36" cy="36" r="24" fill="none" stroke="#9ed1f5" stroke-width="1"/><path d="M37 16L20 56M34 16l14 30M14 45h38" fill="none" stroke="#9ed1f5" stroke-width="6" stroke-linecap="round"/><path d="M37 16L20 56M34 16l14 30M14 45h38" fill="none" stroke="#3d93e2" stroke-width="4" stroke-linecap="round"/><path d="M58 18l16 9c2 1 2 3 1.500 5L53 74c-1 2-2.500 2-4 1l-19-10c-2-1-2-2-1-4l25-42c1-2 2-2 4-1z" fill="#111112"/><path d="M47 35l7 20M40 45h19" stroke="#c4c6c9" stroke-width="5.500" stroke-linecap="round"/></svg></div>
  <div class="app run"><svg viewBox="0 0 72 72"><rect width="72" height="72" rx="17" fill="#fff"/><use href="#vscode" x="10" y="11" width="51" height="50"/></svg></div>
  <div class="app run"><svg viewBox="0 0 72 72"><rect width="72" height="72" rx="17" fill="#f1f0ee"/><path d="M17 6h38a11 11 0 0 1 11 11v22H6V17A11 11 0 0 1 17 6z" fill="#9dbcec"/><path d="M6 39h60v28H17A11 11 0 0 1 6 56z" fill="#24406c"/><path d="M6 50c6-4 12 3 20 2l10 6v9H17A11 11 0 0 1 6 56z" fill="#a9a594"/><path d="M6 50c6-3 9 4 15 3M10 58c6-2 10 4 20 3" stroke="#f0f4f6" stroke-width="3" fill="none"/><path d="M40 48h25l7 24c0 3-3 4-6 4H37c-3 0-5-2-4-5z" fill="#8f9599"/><path d="M42 51h20l4 16H38z" fill="#e9edf0"/><path d="M44 60l6-5 2 6zM53 55l5-2 1 6z" fill="#6c8496"/><path d="M37 40c0-5 31-5 31 0v8c0 5-31 5-31 0z" fill="#141414"/><ellipse cx="52.500" cy="39.500" rx="14" ry="2.600" fill="#3c3c3c"/></svg></div>
  <i class="sep"></i>
  <div class="doc"><svg width="62" height="82" viewBox="0 0 62 82"><path d="M0 8h2v42H1c-1-1-1-2-1-3zM36 8h20c2 0 2 1 2 2v42h1c2 0 2 1 2 3v12c0 3-1 4-3 4H40z" fill="#5ab8ee"/><path d="M5 0h26c11 0 25 17 25 30v50a2 2 0 0 1-2 2H4a2 2 0 0 1-2-2V3a3 3 0 0 1 3-3z" fill="#f4f4f4"/><path d="M31 0c5 7 4 18 3 27 0 2 1 3 3 2 7-1 14-1 19 1C56 17 43 1 31 0z" fill="#fff" stroke="#cfcfcf" stroke-width="1"/></svg></div>
  <div class="thumb"><svg width="84" height="64" viewBox="0 0 84 64"><rect width="84" height="48" fill="#1e1e1e"/><path d="M0 1h84" stroke="#3a3a3c" stroke-width="2"/><path d="M0 47h84" stroke="#2472b8" stroke-width="2"/><path d="M2 6h28M32 4v42" stroke="#3b4654" stroke-width="1"/><path d="M5 10h8M5 14h6M5 18h9M5 22h7M5 26h6M5 30h5M38 8h14M38 12h18M42 17h22M38 21h16M42 25h24M42 29h20M38 34h9" stroke="#414a3b" stroke-width="1.200"/><rect x="55" y="37" width="27" height="27" rx="6" fill="#fff"/><use href="#vscode" x="59" y="41" width="19" height="19"/></svg></div>
  <div class="trash"><svg width="64" height="84" viewBox="0 0 64 84"><path d="M1 18h62l-6 60c-1 8-49 8-50 0z" fill="url(#gTrash)" opacity=".9"/><ellipse cx="32" cy="18" rx="31" ry="9" fill="#74787b"/><path d="M6 16L14 4l6 6 4-9 8 8 8-8 6 9 6-5 7 12c-8 7-44 9-53-1z" fill="#ececec"/><path d="M20 10l6 10M38 6l6 12M48 9l-6 10" stroke="#6b7680" stroke-width="2"/><path d="M23 13l6-2 1 6zM42 12l5 2-4 4z" fill="#d4763a"/><path d="M28 11l5-1v5z" fill="#4aa8d8"/></svg></div>
</footer>
</body>
</html>
```
FILE: styles.css
```css
* { box-sizing: border-box; }
body {
  margin: 0;
  width: 2880px;
  height: 1800px;
  overflow: hidden;
  position: relative;
  font: 400 26px/40px Roboto, sans-serif;
  color: #000;
  background:
    radial-gradient(ellipse 520px 110px at 2060px 1800px, #4b1470, rgba(75, 20, 112, 0) 100%),
    linear-gradient(90deg, transparent 105px, #050508 180px, #050508 2780px, transparent 2870px) 0 1660px / 100% 20px no-repeat,
    linear-gradient(#35165f 48px, #27105a 420px, #170a45 900px, #0d0530 1300px, #08031f 1660px, #0d0630 1800px);
}
svg { display: block; flex: none; }
.defs { position: absolute; }
h1, h2, h3, h4, p { margin: 0; font-weight: 400; }
button { font: 500 26px/40px Roboto, sans-serif; border: 0; background: none; padding: 0; }
a { color: #244a91; text-decoration: underline 2px; text-underline-offset: 6px; text-decoration-skip-ink: none; white-space: pre-wrap; }

/* macOS menu bar */
.menubar {
  height: 50px;
  padding: 0 37px 2px 39px;
  display: flex;
  justify-content: space-between;
  align-items: center;
  color: #eceaf8;
  fill: #eceaf8;
  font: 500 25px/46px Inter, sans-serif;
  text-shadow: 0 2px 4px rgba(0, 0, 0, .3);
  background: linear-gradient(90deg, #421f8b, #341f9c 35%, #281aa2 55%, #23158f);
  border-bottom: 2px solid #0a0524;
}
.menus { display: flex; gap: 42px; align-items: center; }
.menus .apple { margin-right: -2px; margin-top: -2px; }
.menus b { font-size: 26px; font-weight: 700; }
.status { display: grid; grid-template-columns: 91px 81px 73px 67px 88px 71px 63px 62px 60px 273px; align-items: center; }
.status svg { position: relative; top: 1px; }
.status time { font-size: 26.500px; white-space: nowrap; }

/* Safari window */
.window {
  margin-left: 17px;
  width: 2872px;
  height: 1622px;
  border-radius: 20px;
  overflow: hidden;
  background: #adadad;
  box-shadow: 0 0 0 1px #000, 0 20px 50px rgba(0, 0, 0, .6);
  display: flex;
  flex-direction: column;
}
.toolbar {
  height: 104px;
  flex: none;
  background: #363538;
  border-top: 2px solid #737275;
  border-radius: 20px 20px 0 0;
  padding: 0 0 3px 38px;
  display: grid;
  grid-template-columns: 156px 53px 12px 66px 72px 398px 61px 1729px 77px 74px 73px 60px;
  align-items: center;
}
.lights { display: flex; gap: 16px; }
.lights i { width: 24px; height: 24px; border-radius: 50%; }
.red { background: #ec6a5e; }
.yellow { background: #f4bf4f; }
.green { background: #61c554; }
.line { fill: none; stroke: #b8b7ba; stroke-width: 2.4; stroke-linecap: round; stroke-linejoin: round; }
.line.bright { stroke: #dedede; stroke-width: 3; }
.line.faint { stroke: #636266; }
.line.up { margin-top: -4px; }
.vsep { width: 2px; height: 36px; background: #464649; }
.shield { fill: #b8b7ba; }
.url {
  width: 1166px;
  height: 56px;
  border: 2px solid #4c4b4f;
  border-radius: 14px;
  display: flex;
  align-items: center;
  fill: #dedede;
  padding: 0 12px 0 408px;
}
.address { display: flex; align-items: center; gap: 11px; flex: 1; color: #fff; font: 500 25px/40px Inter, sans-serif; padding-top: 3px; }
.url .reload { margin-left: 14px; }

.tabs {
  height: 57px;
  flex: none;
  display: grid;
  grid-template-columns: 242px repeat(11, 240px);
  background: #1e1e20;
  border-bottom: 2px solid #060606;
}
.tab {
  padding: 2px 0 0 45px;
  display: flex;
  align-items: center;
  gap: 8px;
  border-right: 2px solid #434346;
  border-top: 2px solid #060606;
  color: #98989a;
  font: 500 21px/40px Inter, sans-serif;
  white-space: nowrap;
}
.tab:first-child { padding-left: 47px; }
.tab .gc { margin: 0 2px; }
.tab.short { padding-left: 55px; }
.tab.short span { letter-spacing: .5px; }
.tab.active { background: #363538; color: #fff; border-top-color: #363538; }

/* free trial banner */
.banner {
  height: 101px;
  flex: none;
  display: flex;
  align-items: center;
  padding: 0 17px 0 45px;
  font-size: 24px;
  color: #3b3b3b;
  fill: #3b3b3b;
  border-bottom: 3px solid #8f8f8f;
}
.banner svg { position: relative; top: -2px; }
.banner p { margin-left: 44px; flex: 1; }
.dismiss { margin-right: 45px; font-size: 25.600px; }
.activate { width: 167px; height: 64px; border-radius: 8px; background: #254894; color: #adadad; font-size: 25.600px; box-shadow: 0 3px 5px rgba(0, 0, 0, .45); }

/* console header */
.gcp {
  height: 96px;
  flex: none;
  background: #1d5095;
  color: #adadad;
  fill: #adadad;
  display: flex;
  align-items: center;
  padding: 0 37px 0 45px;
  box-shadow: 0 3px 12px rgba(0, 0, 0, .5);
  position: relative;
}
.logo { margin-left: 39px; width: 286px; display: flex; gap: 9px; font: 38.500px/48px Lato, sans-serif; }
.logo b { font-weight: 500; letter-spacing: .7px; -webkit-text-stroke: .7px #adadad; }
.project { width: 442px; display: flex; align-items: center; gap: 12px; font-size: 27.800px; padding-top: 3px; }
.project svg:last-child { margin-left: 7px; }
.search {
  width: 1392px;
  height: 72px;
  border: 2px solid #adadad;
  border-radius: 12px;
  display: flex;
  align-items: center;
  padding-left: 35px;
  font-size: 30.300px;
}
.search b { font-weight: 500; font-size: 29.700px; margin-left: 18px; width: 118px; }
.search span { margin-top: -2px; }
.tools { margin-left: auto; display: flex; align-items: center; }
.count { margin: 0 37px 0 40px; width: 52px; height: 52px; border: 6px solid #3a8573; border-radius: 50%; background: #adadad; color: #1d5095; text-align: center; font-weight: 500; }
.tools svg:nth-child(4) { margin: 0 48px 0 59px; }
.avatar { width: 64px; height: 64px; border-radius: 50%; background: #7c2b17; text-align: center; font-size: 35px; line-height: 66px; position: relative; top: 4px; }

.body { flex: 1; display: flex; min-height: 0; }
.side { width: 127px; flex: none; border-right: 2px solid #999; fill: #505050; }
.side svg { width: 36px; height: 36px; margin: auto; }
.side svg.s { width: 34px; height: 34px; }
.side > div, .list > div { display: flex; }
.product { height: 98px; border-bottom: 2px solid #999; }
.side .product svg { width: 48px; height: 58px; margin-top: 18px; }
.side .list { display: block; height: 873px; padding-top: 16px; overflow: hidden; border-bottom: 2px solid #999; }
.list > div { height: 80px; }
.list .on { background: #a3a5ad; fill: #244a91; }
.foot { height: 98px; border-bottom: 2px solid #999; padding-top: 2px; }
.expand { height: 100px; }

.content { flex: 1; min-width: 0; }
.title { height: 98px; border-bottom: 2px solid #999; display: flex; align-items: center; padding: 0 49px 0 40px; }
.title h1 { font-size: 35.700px; margin-left: 56px; flex: 1; }
.assist { display: flex; align-items: center; gap: 11px; color: #244a91; fill: #244a91; font-weight: 500; font-size: 25.800px; padding-bottom: 2px; }
.subtabs { height: 74px; border-bottom: 2px solid #999; display: flex; padding: 0; color: #3b3b3b; font-weight: 500; font-size: 25.900px; line-height: 70px; }
.subtabs span { padding: 0 48px 0 48px; height: 72px; border-bottom: 4px solid transparent; }
.subtabs .on { color: #244a91; border-color: #244a91; }
.pane { padding: 49px 40px 0 48px; }
.pane h2 { font-size: 35px; font-weight: 500; line-height: 48px; margin-bottom: 15px; }
.pane > p { margin-top: 32px; white-space: nowrap; }
.warn { width: 2656px; height: 115px; padding: 17px 30px 0 54px; border-radius: 8px; background: #a3a3a3; display: flex; }
.warn p { letter-spacing: -.007px; }
.warn svg { margin: 23px 53px 0 0; }
.add { margin: 33px 0 0 4px; width: 195px; height: 64px; border-radius: 8px; padding-left: 24px; display: flex; align-items: center; gap: 18px; color: #244a91; fill: #244a91; font-size: 25.900px; box-shadow: 0 2px 4px rgba(0, 0, 0, .38), 0 1px 8px rgba(0, 0, 0, .1); }
.table { margin-top: 40px; width: 2656px; color: #484848; }
.thead { height: 58px; border-bottom: 2px solid #999; background: #a4a4a4; font: 500 24px/56px Roboto, sans-serif; display: flex; padding-left: 32px; gap: 64px; }
.row { height: 58px; border-bottom: 2px solid #999; padding-left: 32px; line-height: 55px; color: #3b3b3b; }

/* modal */
.dialog {
  position: absolute;
  left: 896px;
  top: 585px;
  width: 1120px;
  height: 712px;
  padding: 52px 32px 0 48px;
  border-radius: 8px;
  background: #fff;
  display: flex;
  flex-direction: column;
  box-shadow: 0 22px 30px -14px rgba(0, 0, 0, .2), 0 48px 76px 6px rgba(0, 0, 0, .14), 0 18px 92px 16px rgba(0, 0, 0, .22);
}
.dialog h3 { font-size: 47.900px; line-height: 56px; margin-bottom: 51px; }
.dialog p { width: 1000px; letter-spacing: -.012px; }
.dialog h4 { font: 500 22px/32px Roboto, sans-serif; margin: 38px 0 7px; }
.dialog label { display: flex; align-items: center; gap: 16px; line-height: 38px; padding-bottom: 2px; }
.dialog label.second { margin-top: 16px; }
.dialog small { font-size: 24px; line-height: 32px; color: #5f5f5f; margin: 8px 0 0 48px; }
.radio { width: 32px; height: 32px; border: 4px solid #767676; border-radius: 50%; position: relative; top: 1px; }
.radio.checked { border-color: #3367d6; background: radial-gradient(#3367d6 8px, #fff 8.700px); }
.actions { margin-top: 120px; display: flex; justify-content: flex-end; gap: 41px; }
.actions button { color: #000; font-size: 25.800px; padding-bottom: 2px; }
.actions .create { width: 142px; height: 64px; border-radius: 8px; background: #ebebeb; color: #1a3fa4; }

.toast {
  position: absolute;
  left: 1030px;
  top: 1528px;
  width: 852px;
  height: 96px;
  padding: 0 42px 0 32px;
  border-radius: 8px;
  background: #222;
  color: #b0b0b0;
  font-size: 25.950px;
  display: flex;
  align-items: center;
  justify-content: space-between;
  box-shadow: 0 6px 12px rgba(0, 0, 0, .35), 0 12px 50px 6px rgba(0, 0, 0, .22);
}
.toast span { margin-top: -2px; }

/* dock */
.dock {
  position: absolute;
  left: 77px;
  top: 1678px;
  width: 2726px;
  height: 112px;
  padding: 15px 14px 0;
  border: 2px solid rgba(160, 150, 190, .33);
  border-radius: 36px;
  background: linear-gradient(90deg, rgba(34, 24, 56, .85), rgba(26, 22, 44, .9) 30%, rgba(28, 22, 56, .9) 60%, rgba(52, 24, 84, .9) 74%, rgba(34, 26, 62, .9) 90%, rgba(38, 30, 66, .85));
  display: flex;
}
.app { width: 72px; height: 72px; margin-right: 22px; flex: none; position: relative; }
.app svg { width: 72px; height: 72px; overflow: visible; }
.petals rect { mix-blend-mode: multiply; opacity: .9; }
.app.run::after { content: ""; position: absolute; left: 32px; top: 83px; width: 8px; height: 8px; border-radius: 50%; background: #a294c2; }
.badge { position: absolute; right: -8px; top: -9px; width: 34px; height: 34px; border-radius: 50%; background: #e54b3f; color: #fff; text-align: center; font: 400 21px/34px Inter, sans-serif; }
.cal { border-radius: 17px; overflow: hidden; background: #fafafa; text-align: center; }
.month { height: 23px; background: #e35c50; color: #fff; font: 600 16px/24px Inter, sans-serif; }
.day { color: #262626; font: 400 42px/44px Inter, sans-serif; letter-spacing: -1px; }
.tv span { position: absolute; left: 33px; top: 16px; color: #fff; font: 500 30px/40px Inter, sans-serif; letter-spacing: -.5px; }
.zoom span { position: absolute; left: 0; top: 14px; width: 72px; text-align: center; color: #fff; font: 700 21px/40px Lato, sans-serif; letter-spacing: -.5px; }
.sep { width: 2px; height: 84px; margin: -2px 30px 0 9px; background: rgba(160, 140, 190, .5); flex: none; }
.doc { margin: -3px 20px 0 8px; }
.thumb { margin: 13px 21px 0 0; }
.trash { margin-top: -6px; }
```
